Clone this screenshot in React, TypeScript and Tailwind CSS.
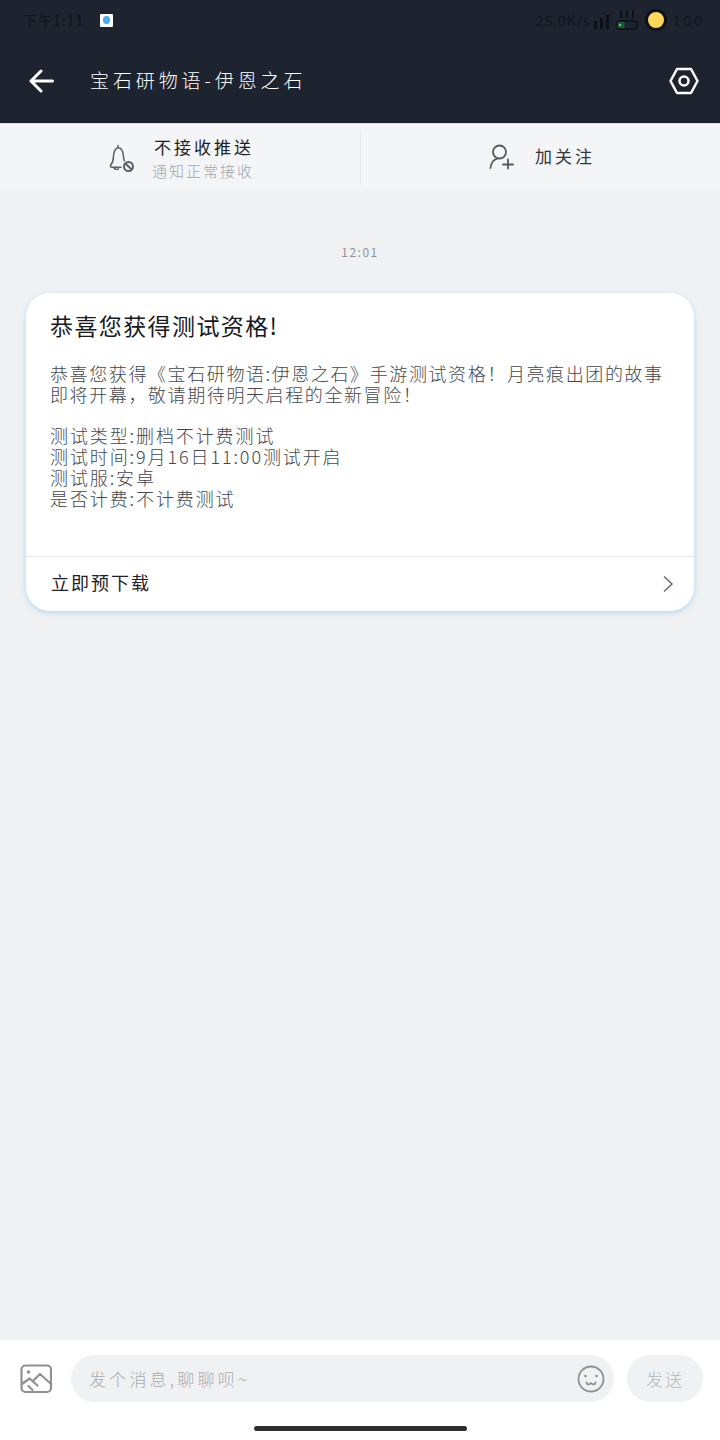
const CJK = "font-['Noto_Sans_CJK_SC','Noto_Sans',sans-serif]";

const intro = ["恭喜您获得《宝石研物语:伊恩之石》手游测试资格！月亮痕出团的故事", "即将开幕，敬请期待明天启程的全新冒险！"];
const details = ["测试类型:删档不计费测试", "测试时间:9月16日11:00测试开启", "测试服:安卓", "是否计费:不计费测试"];

function BellOff() {
  return (
    <svg width="28" height="30" viewBox="0 0 28 30" fill="none" stroke="#5c5f66" strokeWidth="1.5" strokeLinecap="round" strokeLinejoin="round">
      <path d="M11 2.500v2.200M4 21.500c1.800-1.800 2.400-3.600 2.400-7.500 0-5 2-9 4.600-9.300 3-.3 5 3 5.400 8 .1 1.800.3 3.500 1 5" />
      <path d="M4 21.500c-1 1.500-.6 2.800 1 2.800h9" />
      <path d="M7 25c1 1.400 3 1.700 4.500.8" />
      <circle cx="21.500" cy="23.500" r="4.500" strokeWidth="2" />
      <path d="M18.500 20.500l6 6" strokeWidth="2" />
    </svg>
  );
}

function UserPlus() {
  return (
    <svg width="26" height="26" viewBox="0 0 26 26" fill="none" stroke="#55585e" strokeWidth="1.800" strokeLinecap="round">
      <circle cx="10.500" cy="8" r="6.500" />
      <path d="M1.500 24c.5-5 3.500-8.500 7-9.500" />
      <path d="M14 20.500h10M19 15.500v9" />
    </svg>
  );
}

function ImageIcon() {
  return (
    <svg width="32" height="30" viewBox="0 0 32 30" fill="none" stroke="#8f9092" strokeWidth="2.200" strokeLinejoin="round" strokeLinecap="round">
      <rect x="1.500" y="1.500" width="29.500" height="26.500" rx="4" />
      <circle cx="8.500" cy="8" r="1.800" fill="#8f9092" stroke="none" />
      <path d="M2 20l7.500-5.500 8 7M13 17l7-7 10.500 9.500" />
      <path d="M8.500 22l4 4" />
    </svg>
  );
}

function Smile() {
  return (
    <svg width="28" height="28" viewBox="0 0 28 28" fill="none" stroke="#8f9092" strokeWidth="1.800" strokeLinecap="round" strokeLinejoin="round">
      <circle cx="14" cy="14" r="12.500" />
      <circle cx="8.500" cy="11" r="1.300" fill="#8f9092" stroke="none" />
      <circle cx="19.500" cy="11" r="1.300" fill="#8f9092" stroke="none" />
      <path d="M9.500 17.500c.5 2.500 2.800 2.500 4.500.5 1.700 2 4 2 4.500-.5" />
    </svg>
  );
}

export default function App() {
  return (
    <div className={`w-[720px] h-[1440px] flex flex-col bg-[#eff1f3] overflow-hidden ${CJK}`}>
      {/* Header */}
      <header className="bg-[#1e2330] h-[123px] flex flex-col">
        <div className="h-[40px] flex items-center justify-between pl-[23px] pr-[15px] text-[#11141b]">
          <div className="flex items-center gap-[16px]">
            <span className="text-[14px] tracking-[1px]">下午1:11</span>
            <span className="w-[13px] h-[13px] bg-white rounded-[1px] flex items-center justify-center">
              <span className="w-[7px] h-[8px] rounded-full bg-[#45b0ea]" />
            </span>
          </div>
          <div className="flex items-center">
            <span className="text-[14px] tracking-[1px] mr-[3px]">25.0K/s</span>
            <svg width="15" height="14" viewBox="0 0 15 14" fill="#0d1016" className="mr-[7px] mt-[3px]">
              <rect x="0" y="6" width="3" height="8" />
              <rect x="6" y="3" width="3" height="11" />
              <rect x="12" y="0" width="3" height="14" />
            </svg>
            <svg width="22" height="20" viewBox="0 0 22 20" fill="none" className="mr-[7px]">
              <path d="M5 0v8M11 0v8M17 0v8" stroke="#0d1016" strokeWidth="2" />
              <rect x="0.750" y="11" width="20.500" height="8" rx="3" stroke="#0d1016" strokeWidth="1.500" />
              <rect x="1.500" y="12" width="7" height="6" rx="1.500" fill="#1d5a2c" />
              <circle cx="4" cy="15" r="1" fill="#7fe08f" />
            </svg>
            <span className="w-[22px] h-[22px] rounded-full bg-[#fbd857] border-[3px] border-[#0d1016] mr-[6px]" />
            <span className="text-[14px] tracking-[3px]">100</span>
          </div>
        </div>
        <div className="flex-1 flex items-center pl-[29px] pr-[21px] pb-[2px]">
          <svg width="25" height="24" viewBox="0 0 25 24" fill="none" stroke="white" strokeWidth="3" strokeLinecap="round" strokeLinejoin="round">
            <path d="M23.500 12H2M12 2L2 12l10 10" />
          </svg>
          <h1 className="ml-[36px] text-white text-[19px] tracking-[3.900px] font-light whitespace-nowrap">宝石研物语-伊恩之石</h1>
          <svg className="ml-auto" width="30" height="28" viewBox="0 0 30 28" fill="none" stroke="white" strokeWidth="2.500" strokeLinejoin="round">
            <path d="M8 2h14l6.500 12L22 26H8L1.500 14z" />
            <circle cx="15" cy="14" r="4.500" />
          </svg>
        </div>
      </header>

      {/* Actions */}
      <div className="h-[68px] bg-[#f4f5f7] border-t border-[#d9dadd] flex items-center">
        <div className="w-[360px] h-[54px] flex items-center pl-[107px] gap-[17px]">
          <BellOff />
          <div className="flex flex-col items-start">
            <span className="text-[17px] leading-[26px] text-[#1d1f24] tracking-[3px] ml-[2px]">不接收推送</span>
            <span className="text-[15px] leading-[22px] text-[#a3a6ac] tracking-[2px] font-light">通知正常接收</span>
          </div>
        </div>
        <div className="flex-1 h-[54px] border-l border-[#e8e9ec] flex items-center pl-[128px] gap-[20px] pb-[2px]">
          <UserPlus />
          <span className="text-[17px] text-[#33353a] tracking-[3px] mb-[2px]">加关注</span>
        </div>
      </div>

      {/* Messages */}
      <main className="flex-1 flex flex-col px-[26px]">
        <div className="mt-[52px] text-center text-[12px] leading-[18px] text-[#8f9297] tracking-[1.500px]">12:01</div>
        <article className="mt-[32px] h-[318px] bg-white rounded-[24px] shadow-[0_2px_5px_rgba(150,200,230,0.6)] flex flex-col">
          <div className="flex-1 px-[24px] pt-[18px]">
            <h2 className="text-[23px] leading-[28px] tracking-[1.400px] text-[#17191d] whitespace-nowrap">恭喜您获得测试资格!</h2>
            <div className="mt-[24px] text-[18px] leading-[21px] text-[#44474d] tracking-[1.600px] font-light whitespace-nowrap">
              {intro.map((line) => (
                <div key={line} className="h-[21px]">{line}</div>
              ))}
            </div>
            <div className="mt-[20px] text-[18px] leading-[21px] text-[#44474d] tracking-[1.900px] font-light whitespace-nowrap">
              {details.map((line) => (
                <div key={line} className="h-[21px]">{line}</div>
              ))}
            </div>
          </div>
          <div className="h-[55px] border-t border-[#e6e8ea] flex items-center justify-between pl-[25px] pr-[20px]">
            <span className="text-[18px] text-[#1f2125] tracking-[2px] mb-[3px]">立即预下载</span>
            <svg width="12" height="18" viewBox="0 0 12 18" fill="none" stroke="#66696e" strokeWidth="1.500" className="mb-[1px]">
              <path d="M2 1.500L10 9l-8 7.500" />
            </svg>
          </div>
        </article>
      </main>

      {/* Input bar */}
      <footer className="h-[100px] bg-white flex flex-col">
        <div className="h-[47px] mt-[15px] flex items-center pl-[20px] pr-[17px]">
          <ImageIcon />
          <div className="ml-[19px] w-[543px] h-full rounded-full bg-[#f0f1f3] flex items-center pl-[18px] pr-[9px]">
            <span className="text-[17px] text-[#a9abaf] tracking-[3.200px] font-light">发个消息,聊聊呗~</span>
            <span className="ml-auto">
              <Smile />
            </span>
          </div>
          <div className="ml-auto w-[76px] h-full rounded-full bg-[#f0f1f3] flex items-center justify-center text-[17px] text-[#b6b8bc] tracking-[2px] font-light">发送</div>
        </div>
        <div className="mt-[24px] mx-auto w-[213px] h-[5px] rounded-full bg-[#2e2e30]" />
      </footer>
    </div>
  );
}
